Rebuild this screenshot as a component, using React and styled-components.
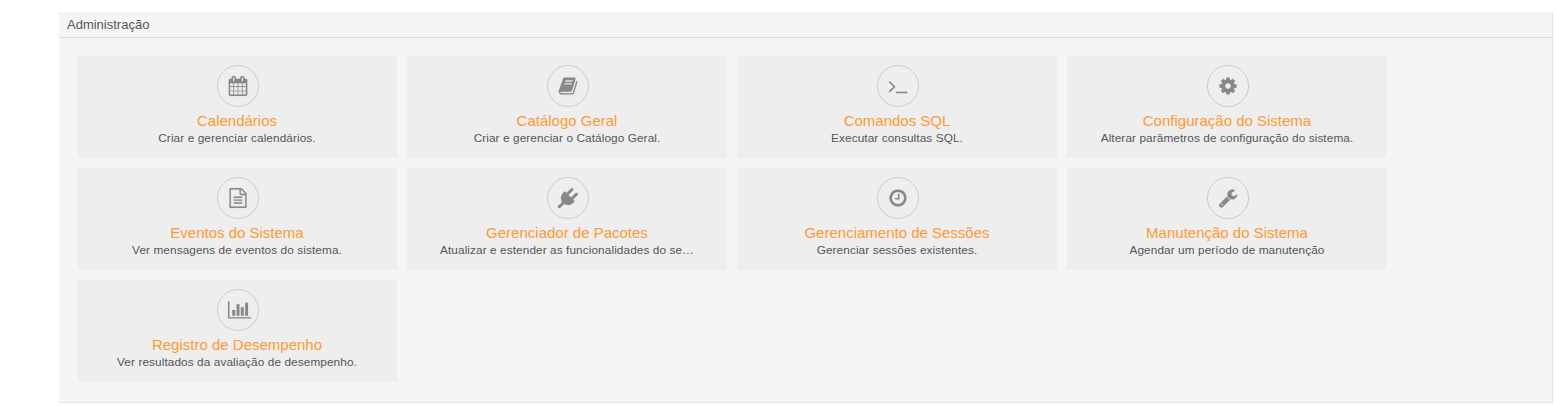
import React from "react";
import styled, { createGlobalStyle } from "styled-components";

const GlobalStyle = createGlobalStyle`
  * { box-sizing: border-box; }
  body {
    margin: 0;
    background: #fff;
    font-family: "Liberation Sans", Arial, sans-serif;
    color: #555;
  }
`;

const Page = styled.main`
  height: 406px;
  padding: 12px 3px 3px 59px;
  overflow: hidden;
`;

const Panel = styled.section`
  height: 391px;
  background: #f5f5f5;
  border-right: 1px solid #e6e6e6;
  border-bottom: 1px solid #e6e6e6;
`;

const PanelHeader = styled.h1`
  margin: 0;
  height: 26px;
  padding: 0 8px;
  border-bottom: 1px solid #dadada;
  font-size: 13px;
  font-weight: 400;
  line-height: 25px;
`;

const CardGrid = styled.div`
  display: grid;
  grid-template-columns: repeat(4, 320px);
  grid-auto-rows: 102px;
  gap: 10px;
  padding: 18px;
`;

const Card = styled.a`
  display: flex;
  flex-direction: column;
  align-items: center;
  padding: 9px 30px 0;
  background: #eee;
`;

const IconRing = styled.span`
  flex: none;
  width: 42px;
  height: 42px;
  margin-left: 2px;
  padding: 10px;
  border: 1px solid #ccc;
  border-radius: 50%;
`;

const Icon = styled.svg`
  display: block;
  width: 20px;
  height: 20px;
  overflow: visible;
  fill: #888;
  stroke: #888;
  stroke-width: 10;
`;

const CardTitle = styled.span`
  margin-top: 5px;
  font-size: 15px;
  line-height: 18px;
  color: #ff9933;
  white-space: nowrap;
`;

const CardText = styled.span`
  max-width: 100%;
  overflow: hidden;
  text-overflow: ellipsis;
  white-space: nowrap;
  font-size: 11.8px;
  letter-spacing: 0.09px;
  line-height: 16px;
`;

const icons = {
  calendar:
    "M192 1664h288v-288h-288v288zm352 0h320v-288h-320v288zm-352-352h288v-320h-288v320zm352 0h320v-320h-320v320zm-352-384h288v-288h-288v288zm736 736h320v-288h-320v288zm-384-736h320v-288h-320v288zm768 736h288v-288h-288v288zm-384-352h320v-320h-320v320zm-352-864v-288q0-13-9.5-22.5t-22.5-9.5h-64q-13 0-22.5 9.5t-9.5 22.5v288q0 13 9.5 22.5t22.5 9.5h64q13 0 22.5-9.5t9.5-22.5zm736 864h288v-320h-288v320zm-384-384h320v-288h-320v288zm384 0h288v-288h-288v288zm32-480v-288q0-13-9.5-22.5t-22.5-9.5h-64q-13 0-22.5 9.5t-9.5 22.5v288q0 13 9.5 22.5t22.5 9.5h64q13 0 22.5-9.5t9.5-22.5zm384-64v1280q0 52-38 90t-90 38h-1408q-52 0-90-38t-38-90v-1280q0-52 38-90t90-38h128v-96q0-66 47-113t113-47h64q66 0 113 47t47 113v96h384v-96q0-66 47-113t113-47h64q66 0 113 47t47 113v96h128q52 0 90 38t38 90z",
  book: "M1703 478q40 57 18 129l-275 906q-19 64-76.5 107.5t-122.5 43.5h-923q-77 0-148.5-53.5t-99.5-131.5q-24-67-2-127 0-4 3-27t4-37q1-8-3-21.5t-3-19.5q2-11 8-21t16.5-23.5 16.5-23.5q23-38 45-91.5t30-91.5q3-10 .5-30t-.5-28q3-11 17-28t17-23q21-36 42-92t25-90q1-9-2.5-32t.5-28q4-13 22-30.5t22-22.5q19-26 42.5-84.5t27.5-96.5q1-8-3-25.5t-2-26.5q2-8 9-18t18-23 17-21q8-12 16.5-30.5t15-35 16-36 19.5-32 26.5-23.5 36-11.5 47.5 5.5l-1 3q38-9 51-9h761q74 0 114 56t18 130l-274 906q-36 119-71.5 153.5t-128.5 34.5h-869q-27 0-38 15-11 16-1 43 24 70 144 70h923q29 0 56-15.5t35-41.5l300-987q7-22 5-57 38 15 59 43zm-1064 2q-4 13 2 22.5t20 9.5h608q13 0 25.5-9.5t16.5-22.5l21-64q4-13-2-22.5t-20-9.5h-608q-13 0-25.5 9.5t-16.5 22.5zm-83 256q-4 13 2 22.5t20 9.5h608q13 0 25.5-9.5t16.5-22.5l21-64q4-13-2-22.5t-20-9.5h-608q-13 0-25.5 9.5t-16.5 22.5z",
  terminal:
    "M649 983l-466 466q-10 10-23 10t-23-10l-50-50q-10-10-10-23t10-23l393-393-393-393q-10-10-10-23t10-23l50-50q10-10 23-10t23 10l466 466q10 10 10 23t-10 23zm1079 457v64q0 14-9 23t-23 9h-960q-14 0-23-9t-9-23v-64q0-14 9-23t23-9h960q14 0 23 9t9 23z",
  cog: "M1152 896q0-106-75-181t-181-75-181 75-75 181 75 181 181 75 181-75 75-181zm512-109v222q0 12-8 23t-20 13l-185 28q-19 54-39 91 35 50 107 138 10 12 10 25t-9 23q-27 37-99 108t-94 71q-12 0-26-9l-138-108q-44 23-91 38-16 136-29 186-7 28-36 28h-222q-14 0-24.5-8.5t-11.5-21.5l-28-184q-49-16-90-37l-141 107q-10 9-25 9-14 0-25-11-126-114-165-168-7-10-7-23 0-12 8-23 15-21 51-66.5t54-70.5q-27-50-41-99l-183-27q-13-2-21-12.5t-8-23.5v-222q0-12 8-23t19-13l186-28q14-46 39-92-40-57-107-138-10-12-10-24 0-10 9-23 26-36 98.5-107.5t94.5-71.5q13 0 26 10l138 107q44-23 91-38 16-136 29-186 7-28 36-28h222q14 0 24.5 8.5t11.5 21.5l28 184q49 16 90 37l142-107q9-9 24-9 13 0 25 10 129 119 165 170 7 8 7 22 0 12-8 23-15 21-51 66.5t-54 70.5q26 50 41 98l183 28q13 2 21 12.5t8 23.5z",
  file: "M1596 380q28 28 48 76t20 88v1152q0 40-28 68t-68 28h-1344q-40 0-68-28t-28-68v-1600q0-40 28-68t68-28h896q40 0 88 20t76 48zm-444-244v376h376q-10-29-22-41l-313-313q-12-12-41-22zm384 1528v-1024h-416q-40 0-68-28t-28-68v-416h-768v1536h1280zm-1024-864q0-14 9-23t23-9h704q14 0 23 9t9 23v64q0 14-9 23t-23 9h-704q-14 0-23-9t-9-23v-64zm736 224q14 0 23 9t9 23v64q0 14-9 23t-23 9h-704q-14 0-23-9t-9-23v-64q0-14 9-23t23-9h704zm0 256q14 0 23 9t9 23v64q0 14-9 23t-23 9h-704q-14 0-23-9t-9-23v-64q0-14 9-23t23-9h704z",
  plug: "M1755 453q37 38 37 90.5t-37 90.5l-401 400 150 150-160 160q-163 163-389.5 186.5t-411.5-100.5l-362 362h-181v-181l362-362q-124-185-100.5-411.5t186.5-389.5l160-160 150 150 400-401q38-37 91-37t90 37 37 90.5-37 90.5l-400 401 234 234 401-400q38-37 91-37t90 37z",
  clock:
    "M1024 544v448q0 14-9 23t-23 9h-320q-14 0-23-9t-9-23v-64q0-14 9-23t23-9h224v-352q0-14 9-23t23-9h64q14 0 23 9t9 23zm416 352q0-148-73-273t-198-198-273-73-273 73-198 198-73 273 73 273 198 198 273 73 273-73 198-198 73-273zm224 0q0 209-103 385.5t-279.5 279.5-385.5 103-385.5-103-279.5-279.5-103-385.5 103-385.5 279.5-279.5 385.5-103 385.5 103 279.5 279.5 103 385.5z",
  wrench:
    "M448 1472q0-26-19-45t-45-19-45 19-19 45 19 45 45 19 45-19 19-45zm644-420l-682 682q-37 37-90 37-52 0-91-37l-106-108q-38-36-38-90 0-53 38-91l681-681q39 98 114.5 173.5t173.5 114.5zm634-435q0 39-23 106-47 134-164.5 217.5t-258.5 83.5q-185 0-316.5-131.5t-131.5-316.5 131.5-316.5 316.5-131.5q58 0 121.5 16.5t107.5 46.5q16 11 16 28t-16 28l-293 169v224l193 107q5-3 79-48.5t135.5-81 70.5-35.5q15 0 23.5 10t8.5 25z",
  chart:
    "M640 896v512h-256v-512h256zm384-512v1024h-256v-1024h256zm1024 1152v128h-2048v-1536h128v1408h1920zm-640-896v768h-256v-768h256zm384-384v1152h-256v-1152h256z",
};

const items = [
  ["calendar", "Calendários", "Criar e gerenciar calendários."],
  ["book", "Catálogo Geral", "Criar e gerenciar o Catálogo Geral."],
  ["terminal", "Comandos SQL", "Executar consultas SQL."],
  ["cog", "Configuração do Sistema", "Alterar parâmetros de configuração do sistema."],
  ["file", "Eventos do Sistema", "Ver mensagens de eventos do sistema."],
  ["plug", "Gerenciador de Pacotes", "Atualizar e estender as funcionalidades do se…"],
  ["clock", "Gerenciamento de Sessões", "Gerenciar sessões existentes."],
  ["wrench", "Manutenção do Sistema", "Agendar um período de manutenção"],
  ["chart", "Registro de Desempenho", "Ver resultados da avaliação de desempenho."],
];

export default function App() {
  return (
    <Page>
      <GlobalStyle />
      <Panel>
        <PanelHeader>Administração</PanelHeader>
        <CardGrid>
          {items.map(([icon, title, text]) => (
            <Card key={title}>
              <IconRing>
                <Icon viewBox="0 0 1792 1792" aria-hidden="true">
                  <path d={icons[icon]} />
                </Icon>
              </IconRing>
              <CardTitle>{title}</CardTitle>
              <CardText>{text}</CardText>
            </Card>
          ))}
        </CardGrid>
      </Panel>
    </Page>
  );
}
